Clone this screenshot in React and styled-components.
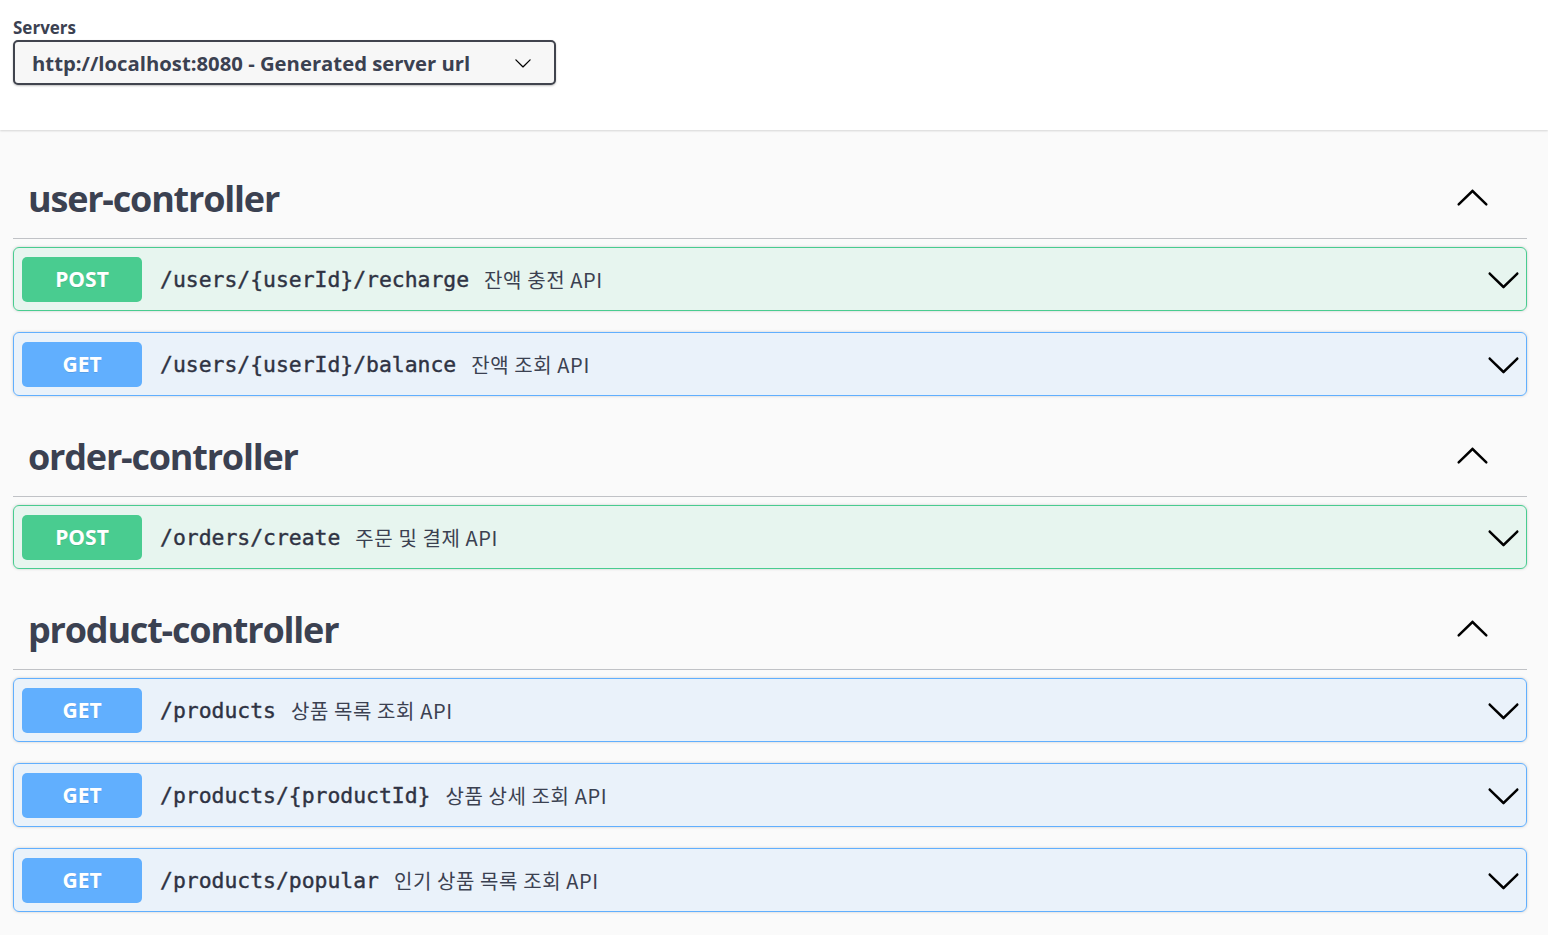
import React from "react";
import styled, { createGlobalStyle } from "styled-components";

const GlobalStyle = createGlobalStyle`
  html, body {
    margin: 0;
    padding: 0;
    background: #fafafa;
  }
  body {
    font-family: "Open Sans", "Noto Sans CJK KR", sans-serif;
    color: #3b4151;
  }
`;

const colors = {
  POST: { main: "#49cc90", bg: "rgba(73,204,144,.1)" },
  GET: { main: "#61affe", bg: "rgba(97,175,254,.1)" },
};

const groups = [
  {
    name: "user-controller",
    ops: [
      { method: "POST", path: "/users/{userId}/recharge", desc: "잔액 충전 API" },
      { method: "GET", path: "/users/{userId}/balance", desc: "잔액 조회 API" },
    ],
  },
  {
    name: "order-controller",
    ops: [{ method: "POST", path: "/orders/create", desc: "주문 및 결제 API" }],
  },
  {
    name: "product-controller",
    ops: [
      { method: "GET", path: "/products", desc: "상품 목록 조회 API" },
      { method: "GET", path: "/products/{productId}", desc: "상품 상세 조회 API" },
      { method: "GET", path: "/products/popular", desc: "인기 상품 목록 조회 API" },
    ],
  },
];

// swagger-ui style chevron
const Arrow = ({ up, size = 35 }) => (
  <svg
    width={size}
    height={size}
    viewBox="0 0 20 20"
    style={{ transform: up ? "rotate(180deg)" : "none", flex: "none" }}
  >
    <path
      fill="#000"
      d="M17.418 6.109c.272-.268.709-.268.979 0s.271.701 0 .969l-7.908 7.83c-.27.268-.707.268-.979 0l-7.908-7.83c-.27-.268-.27-.701 0-.969.271-.268.709-.268.979 0L10 13.25l7.418-7.141z"
    />
  </svg>
);

const SchemeBar = styled.div`
  background: #fff;
  box-shadow: 0 1px 2px 0 rgba(0, 0, 0, 0.15);
  padding: 16px 13px 45px;
`;

const Label = styled.div`
  font-size: 17px;
  font-weight: 700;
  line-height: 24px;
`;

const Select = styled.div`
  width: 543px;
  height: 45px;
  box-sizing: border-box;
  border: 2px solid #41444e;
  border-radius: 5px;
  background: #f7f7f7;
  box-shadow: 0 1px 2px 0 rgba(0, 0, 0, 0.25);
  display: flex;
  align-items: center;
  justify-content: space-between;
  padding: 0 22px 0 17px;
  font-size: 20.3px;
  font-weight: 700;
  color: #3b4151;
`;

const Wrapper = styled.div`
  padding: 29px 21px 30px 13px;
`;

const TagHeader = styled.div`
  display: flex;
  align-items: center;
  justify-content: space-between;
  height: 79px;
  border-bottom: 1px solid rgba(59, 65, 81, 0.3);
  padding: 0 37px 0 15px;
  margin-bottom: 8px;
`;

const TagTitle = styled.h3`
  margin: 0;
  font-size: 36px;
  font-weight: 700;
  letter-spacing: -1.2px;
  color: #3b4151;
`;

const Section = styled.section`
  margin: 0;
`;

const Opblock = styled.div`
  display: flex;
  align-items: center;
  height: 64px;
  box-sizing: border-box;
  padding: 0 5px 0 8px;
  margin-bottom: 21px;
  border: 1px solid ${(p) => colors[p.method].main};
  background: ${(p) => colors[p.method].bg};
  border-radius: 6px;
  box-shadow: 0 0 3px rgba(0, 0, 0, 0.19);
`;

const Method = styled.span`
  flex: none;
  width: 120px;
  height: 45px;
  border-radius: 5px;
  background: ${(p) => colors[p.method].main};
  color: #fff;
  font-size: 21px;
  font-weight: 700;
  display: flex;
  align-items: center;
  justify-content: center;
  text-shadow: 0 1px 0 rgba(0, 0, 0, 0.1);
`;

const Path = styled.span`
  font-family: "DejaVu Sans Mono", "Liberation Mono", monospace;
  font-size: 21.4px;
  font-weight: 400;
  color: #2f3343;
  margin-left: 18px;
  -webkit-text-stroke: 0.4px #2f3343;
`;

const Desc = styled.span`
  flex: 1;
  font-family: "Noto Sans CJK KR", sans-serif;
  font-size: 20px;
  letter-spacing: 0.6px;
  color: #3b4151;
  margin-left: 15px;
`;

export default function App() {
  return (
    <>
      <GlobalStyle />
      <SchemeBar>
        <Label>Servers</Label>
        <Select>
          <span>http://localhost:8080 - Generated server url</span>
          <Arrow size={18} />
        </Select>
      </SchemeBar>
      <Wrapper>
        {groups.map((g) => (
          <Section key={g.name}>
            <TagHeader>
              <TagTitle>{g.name}</TagTitle>
              <Arrow up />
            </TagHeader>
            {g.ops.map((op) => (
              <Opblock key={op.path} method={op.method}>
                <Method method={op.method}>{op.method}</Method>
                <Path>{op.path}</Path>
                <Desc>{op.desc}</Desc>
                <Arrow />
              </Opblock>
            ))}
          </Section>
        ))}
      </Wrapper>
    </>
  );
}
